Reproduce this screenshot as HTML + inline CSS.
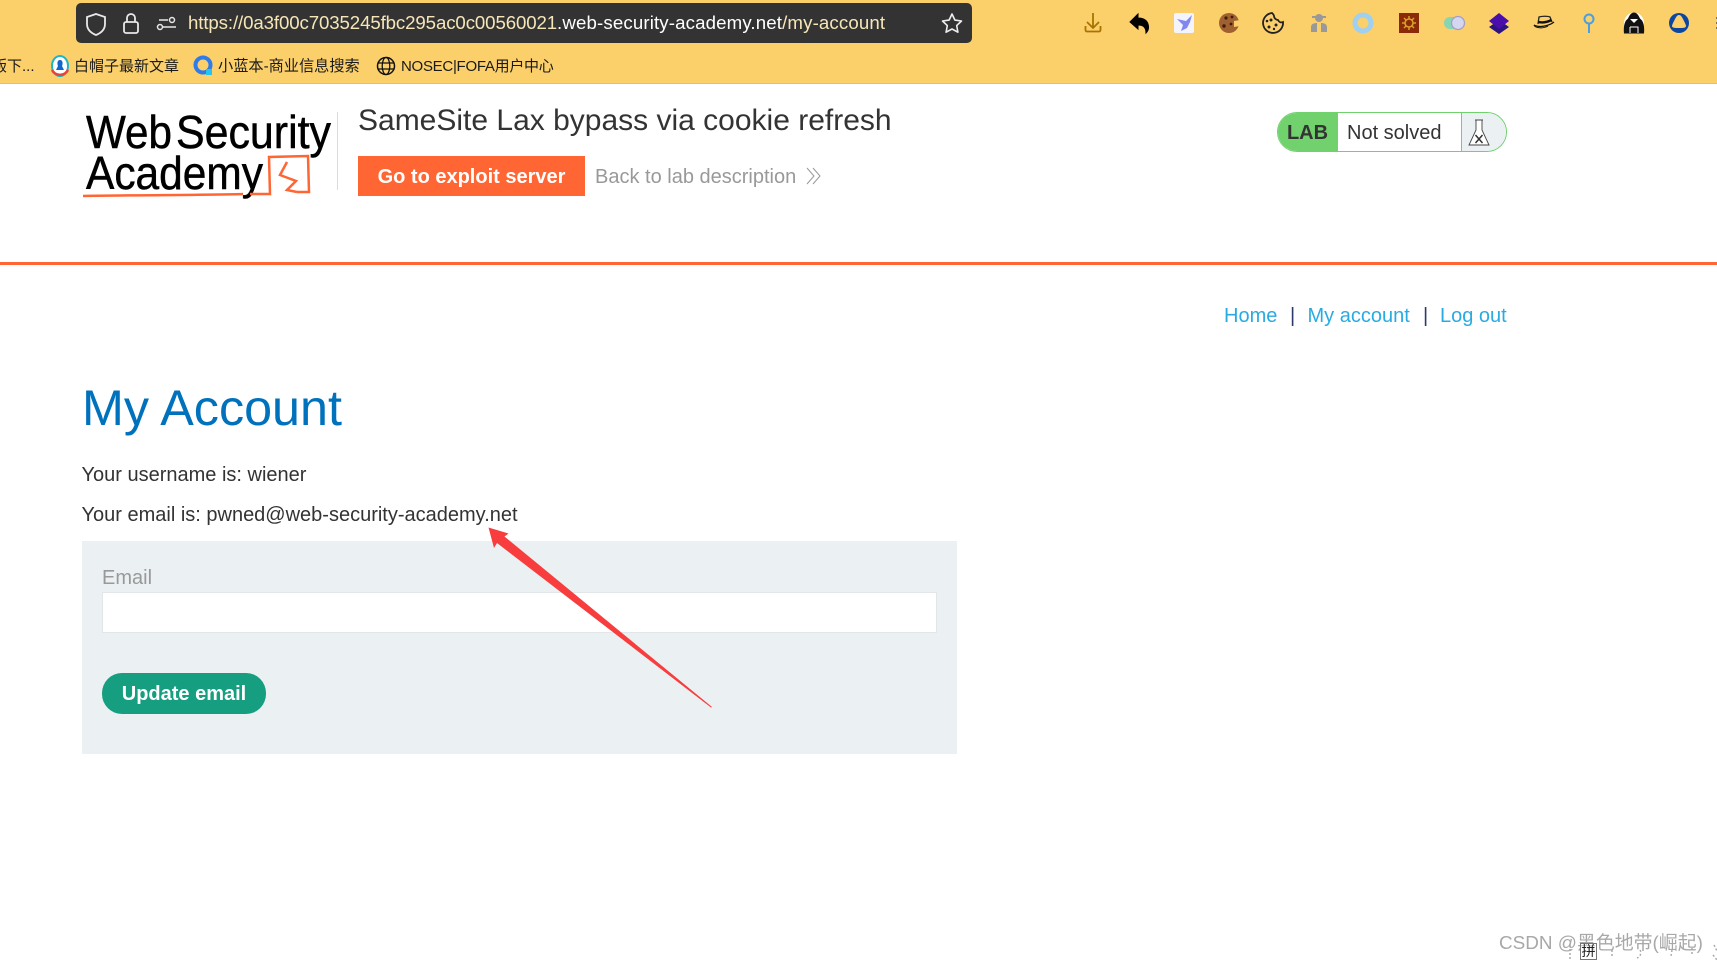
<!DOCTYPE html>
<html lang="en">
<head>
<meta charset="utf-8">
<title>My Account</title>
<style>
html,body{margin:0;padding:0;background:#fff}
body{width:1717px;height:962px;position:relative;overflow:hidden;font-family:"Liberation Sans","Noto Sans CJK SC",sans-serif;color:#333}
.a{position:absolute;white-space:nowrap;line-height:1}
#toolbar{position:absolute;left:0;top:0;width:1717px;height:83px;background:#fbcf6a;border-bottom:1px solid #f0bd4e}
#url{position:absolute;left:76px;top:3px;width:896px;height:40px;background:#333;border-radius:5px}
.bm{font-size:15px;color:#1a1a1a;top:59px}
nav a{color:#29abe2;text-decoration:none}
svg{position:absolute;overflow:visible}
</style>
</head>
<body>
<div id="toolbar"></div>
<div id="url"></div>
<svg style="left:0;top:0" width="1717" height="84" fill="none">
  <!-- shield, lock, sliders -->
  <path d="M96 14l9 3v7c0 6-4 9-9 11-5-2-9-5-9-11v-7z" stroke="#e8e8e8" stroke-width="1.8"/>
  <rect x="124" y="22" width="14" height="11" rx="2" stroke="#e8e8e8" stroke-width="1.8"/>
  <path d="M127 22v-4a4 4 0 0 1 8 0v4" stroke="#e8e8e8" stroke-width="1.8"/>
  <path d="M159 20h9M163 27h13" stroke="#e8e8e8" stroke-width="1.6"/>
  <circle cx="172" cy="20" r="2.500" stroke="#e8e8e8" stroke-width="1.500"/>
  <circle cx="160" cy="27" r="2.500" stroke="#e8e8e8" stroke-width="1.500"/>
  <!-- star -->
  <path d="M952 14l2.900 6.100 6.600.9-4.800 4.600 1.200 6.600-5.900-3.200-5.900 3.200 1.200-6.600-4.800-4.600 6.600-.9z" stroke="#eee" stroke-width="1.6" stroke-linejoin="round"/>
  <!-- bookmark icons -->
  <ellipse cx="60" cy="66" rx="8" ry="10" fill="#fff" stroke="#1cb5c9" stroke-width="2"/>
  <path d="M52 70a9 9 0 0 0 16 0" stroke="#e8413c" stroke-width="2.500"/>
  <path d="M60 60c3 0 3 4 2 6l2 4h-8l2-4c-1-2-1-6 2-6z" fill="#1166cc"/>
  <circle cx="203" cy="65" r="7.500" stroke="#2f7be8" stroke-width="4"/>
  <rect x="206" y="69" width="6" height="6" fill="#25c4ee"/>
  <circle cx="386" cy="66" r="8.500" stroke="#111" stroke-width="1.500"/>
  <ellipse cx="386" cy="66" rx="3.800" ry="8.500" stroke="#111" stroke-width="1.300"/>
  <path d="M378 63h16M378 69h16" stroke="#111" stroke-width="1.300"/>
  <!-- download -->
  <path d="M1093 13v15M1087 22l6 6 6-6" stroke="#a87400" stroke-width="1.800"/>
  <path d="M1085.500 26v4a1.500 1.500 0 0 0 1.500 1.500h12a1.500 1.500 0 0 0 1.500-1.500v-4" stroke="#a87400" stroke-width="1.800"/>
  <!-- back arrow -->
  <path d="M1138 14l-8 8 8 7v-4c5 0 8 2 8 8 3-3 3-6 2-9-1-4-5-6-10-6z" fill="#000" stroke="#000"/>
  <!-- bird -->
  <rect x="1174" y="13" width="20" height="20" rx="2" fill="#f4f4fd"/>
  <path d="M1192 15l-6 6-9-2 6 6-2 6 6-3 3-6z" fill="#8187ee"/>
  <!-- cookie -->
  <circle cx="1229" cy="23" r="10" fill="#a0602f"/>
  <circle cx="1226" cy="18" r="1.600" fill="#3c1e0c"/><circle cx="1232" cy="17" r="1.400" fill="#3c1e0c"/>
  <circle cx="1224" cy="26" r="1.700" fill="#3c1e0c"/><circle cx="1231" cy="24" r="1.400" fill="#3c1e0c"/>
  <path d="M1234 21l6-1v6l-6 1z" fill="#fbcf6a"/>
  <!-- cookie outline -->
  <path d="M1272 13a10 10 0 1 0 11 9c-2 1-4 0-5-2-2 0-4-2-4-4 0-1-1-2-2-3z" stroke="#222" stroke-width="1.800" fill="#fbcf6a"/>
  <circle cx="1271" cy="20" r="1.500" fill="#222"/><circle cx="1276" cy="25" r="1.500" fill="#222"/><circle cx="1269" cy="27" r="1.500" fill="#222"/><circle cx="1267" cy="21" r="1.300" fill="#222"/><circle cx="1274" cy="29" r="1.200" fill="#222"/>
  <!-- spy -->
  <circle cx="1319" cy="18" r="4" fill="#999"/><path d="M1312 17h14" stroke="#999" stroke-width="2"/>
  <path d="M1311 32v-5c0-3 3-4 6-4v9zM1327 32v-5c0-3-3-4-6-4v9z" fill="#999"/>
  <!-- ring -->
  <circle cx="1363" cy="23" r="8" stroke="#9fd0ef" stroke-width="5"/>
  <!-- sun -->
  <rect x="1399" y="13" width="20" height="20" fill="#8a2a08"/>
  <circle cx="1409" cy="23" r="4" stroke="#d8a02a" stroke-width="1.600"/>
  <path d="M1409 16v3M1409 27v3M1402 23h3M1413 23h3M1404 18l2 2M1412 26l2 2M1414 18l-2 2M1406 26l-2 2" stroke="#d8a02a" stroke-width="1.500"/>
  <!-- toggle -->
  <rect x="1444" y="17" width="20" height="12" rx="6" fill="#86d5b5"/>
  <circle cx="1458" cy="23" r="6.500" fill="#d5d6f0" stroke="#a49fc6" stroke-width="1.300"/>
  <!-- layers -->
  <path d="M1499 20l10 7-10 7-10-7z" fill="#2c1380"/>
  <path d="M1499 13l10 8-10 8-10-8z" fill="#4a0eab"/>
  <!-- hat -->
  <path d="M1538 24l1-7c3-1 9-1 11 0l2 5" stroke="#222" stroke-width="1.300"/>
  <path d="M1538.500 22c4 1 9 0 13-2" stroke="#111" stroke-width="2.400"/>
  <path d="M1534 25c5 3 15 1 20-3" stroke="#111" stroke-width="1.300"/><path d="M1534 25c1 3 9 4 14 1" stroke="#111" stroke-width="1"/>
  <!-- magnifier -->
  <circle cx="1589" cy="19" r="4.500" stroke="#4b9fe0" stroke-width="2"/>
  <path d="M1589 24v9" stroke="#4b9fe0" stroke-width="2"/>
  <!-- hood -->
  <ellipse cx="1634" cy="23" rx="10" ry="10.500" fill="#fff"/>
  <path d="M1634 12.500c-3 0-4.500 3-6 6l-2 2c-2 3-2.500 8-2 13h20c.5-5 0-10-2-13l-2-2c-1.500-3-3-6-6-6z" fill="#111"/>
  <path d="M1630 19h8l-4 4z" fill="#fff"/>
  <path d="M1630 27h8v6M1630 27v6" stroke="#fff" stroke-width="1"/>
  <!-- triangle -->
  <circle cx="1679" cy="23" r="10" fill="#0b47a1"/>
  <path d="M1679 15c2 0 3 2 5 6 1 2 2 4 2 5 0 2-3 2-7 2s-7 0-7-2c0-1 1-3 2-5 2-4 3-6 5-6z" fill="#fbcf6a"/>
  <path d="M1716 18h2M1716 23h2M1716 28h2" stroke="#555" stroke-width="1.500"/>
</svg>
<span class="a" style="left:188px;top:14px;font-size:18.67px;color:#f6e6b8"><span style="letter-spacing:-.11px">https://0a3f00c7035245fbc295ac0c00560021</span><span style="color:#fff;letter-spacing:.14px">.web-security-academy.net</span><span style="letter-spacing:.14px">/my-account</span></span>
<span class="a bm" style="left:-8px;font-size:15px">版下...</span>
<span class="a bm" style="left:74px">白帽子最新文章</span>
<span class="a bm" style="left:218px;font-size:15.2px">小蓝本-商业信息搜索</span>
<span class="a bm" style="left:401px;letter-spacing:-.28px">NOSEC|FOFA用户中心</span>

<!-- Logo -->
<svg style="left:0;top:0" width="360" height="220" fill="none">
  <text x="86" y="148" font-family="Liberation Sans" font-size="46" fill="#000" textLength="86" lengthAdjust="spacingAndGlyphs" stroke="#000" stroke-width=".5">Web</text>
  <text x="176" y="148" font-family="Liberation Sans" font-size="46" fill="#000" textLength="155" lengthAdjust="spacingAndGlyphs" stroke="#000" stroke-width=".5">Security</text>
  <text x="86" y="189" font-family="Liberation Sans" font-size="46" fill="#000" textLength="177" lengthAdjust="spacingAndGlyphs" stroke="#000" stroke-width=".5">Academy</text>
  <path d="M83 196c60-1 130-1 160-2M250 194l20 0-1-37 39-1 1 36-12 0" stroke="#ff6633" stroke-width="2.500"/>
  <path d="M287 162l-7 13 16 6-9 9 10 2" stroke="#ff6633" stroke-width="2.500"/>
  <path d="M337.500 112v78" stroke="#dcdcdc" stroke-width="1"/>
</svg>

<div class="a" style="left:358px;top:106px;font-size:30px;color:#333">SameSite Lax bypass via cookie refresh</div>
<div class="a" style="left:358px;top:156px;width:227px;height:40px;background:#ff6633;color:#fff;font-weight:bold;font-size:20px;line-height:42px;text-align:center">Go to exploit server</div>
<div class="a" style="left:595px;top:167px;font-size:20px;color:#999">Back to lab description</div>
<svg style="left:805px;top:167px" width="18" height="18" fill="none"><path d="M2 1l7 8-7 8M8 1l7 8-7 8" stroke="#999" stroke-width="1"/></svg>

<!-- Lab badge -->
<div class="a" style="left:1277px;top:112px;width:230px;height:40px;box-sizing:border-box;border:1px solid #70d16d;border-radius:20px;overflow:hidden;background:#fff">
  <div class="a" style="left:-1px;top:-1px;width:61px;height:40px;background:#70d16d;font-weight:bold;font-size:20px;line-height:43px;text-align:center;color:#333">LAB</div>
  <div class="a" style="left:69px;top:10px;font-size:20px;color:#333">Not solved</div>
  <div class="a" style="left:183px;top:-1px;width:46px;height:40px;background:#ebf0f2;border-left:1px solid #70d16d"></div>
</div>
<svg style="left:1467px;top:117px" width="24" height="32" fill="none"><path d="M8 3h8M9 3v10L2 28h20L15 13V3" stroke="#444" stroke-width=".9" fill="#fff"/><path d="M8.500 18l7 8M15.500 18l-7 8" stroke="#333" stroke-width="1.500"/></svg>

<div class="a" style="left:0;top:262px;width:1717px;height:3px;background:#ff6633"></div>

<nav class="a" style="left:0;top:306px;font-size:20px;color:#333">
  <a class="a" href="#" style="left:1224px;top:0">Home</a>
  <span class="a" style="left:1290px;top:0;color:#2b3a6b">|</span>
  <a class="a" href="#" style="left:1307.500px;top:0">My account</a>
  <span class="a" style="left:1423px;top:0;color:#2b3a6b">|</span>
  <a class="a" href="#" style="left:1440px;top:0">Log out</a>
</nav>

<h1 class="a" style="left:82px;top:383px;margin:0;font-weight:normal;font-size:50.3px;color:#0071bc">My Account</h1>
<p class="a" style="left:81.500px;top:465px;margin:0;font-size:20px">Your username is: wiener</p>
<p class="a" style="left:81.500px;top:505px;margin:0;font-size:20px">Your email is: pwned@web-security-academy.net</p>

<div class="a" style="left:82px;top:541px;width:875px;height:213px;background:#ebf0f2"></div>
<label class="a" style="left:102px;top:568px;font-size:20px;color:#999">Email</label>
<div class="a" style="left:102px;top:592px;width:835px;height:41px;box-sizing:border-box;background:#fff;border:1px solid #e3e6e8"></div>
<div class="a" style="left:102px;top:673px;width:164px;height:41px;border-radius:20px;background:#159e7f;color:#fff;font-weight:bold;font-size:20px;line-height:43px;text-align:center">Update email</div>

<!-- Red arrow -->
<svg style="left:0;top:0" width="1717" height="962" fill="none">
  <path d="M488.500 527.500l20 6-4 3 207.500 170.500-1 .5-214-164.500-3 5z" fill="#f73d3d"/>
</svg>

<!-- Watermark -->
<div class="a" style="left:1499px;top:935px;font-size:18.9px;color:#a8a8a8">CSDN @黑色地带(崛起)</div>
<div class="a" style="left:1580px;top:943px;width:17px;height:17px;box-sizing:border-box;border:1px solid #777;font-size:14px;line-height:15px;text-align:center;color:#222;background:rgba(255,255,255,.4)">拼</div>
<svg style="left:0;top:0" width="1717" height="962" fill="none">
  <path d="M1570 945v14M1612 950v8M1640 950c2 3 0 7-3 8M1672 950l-1 6M1692 948v8M1714 945l3 6M1713 955l4 5" stroke="#aaa" stroke-width="1.500" stroke-dasharray="2 2"/>
</svg>
</body>
</html>
